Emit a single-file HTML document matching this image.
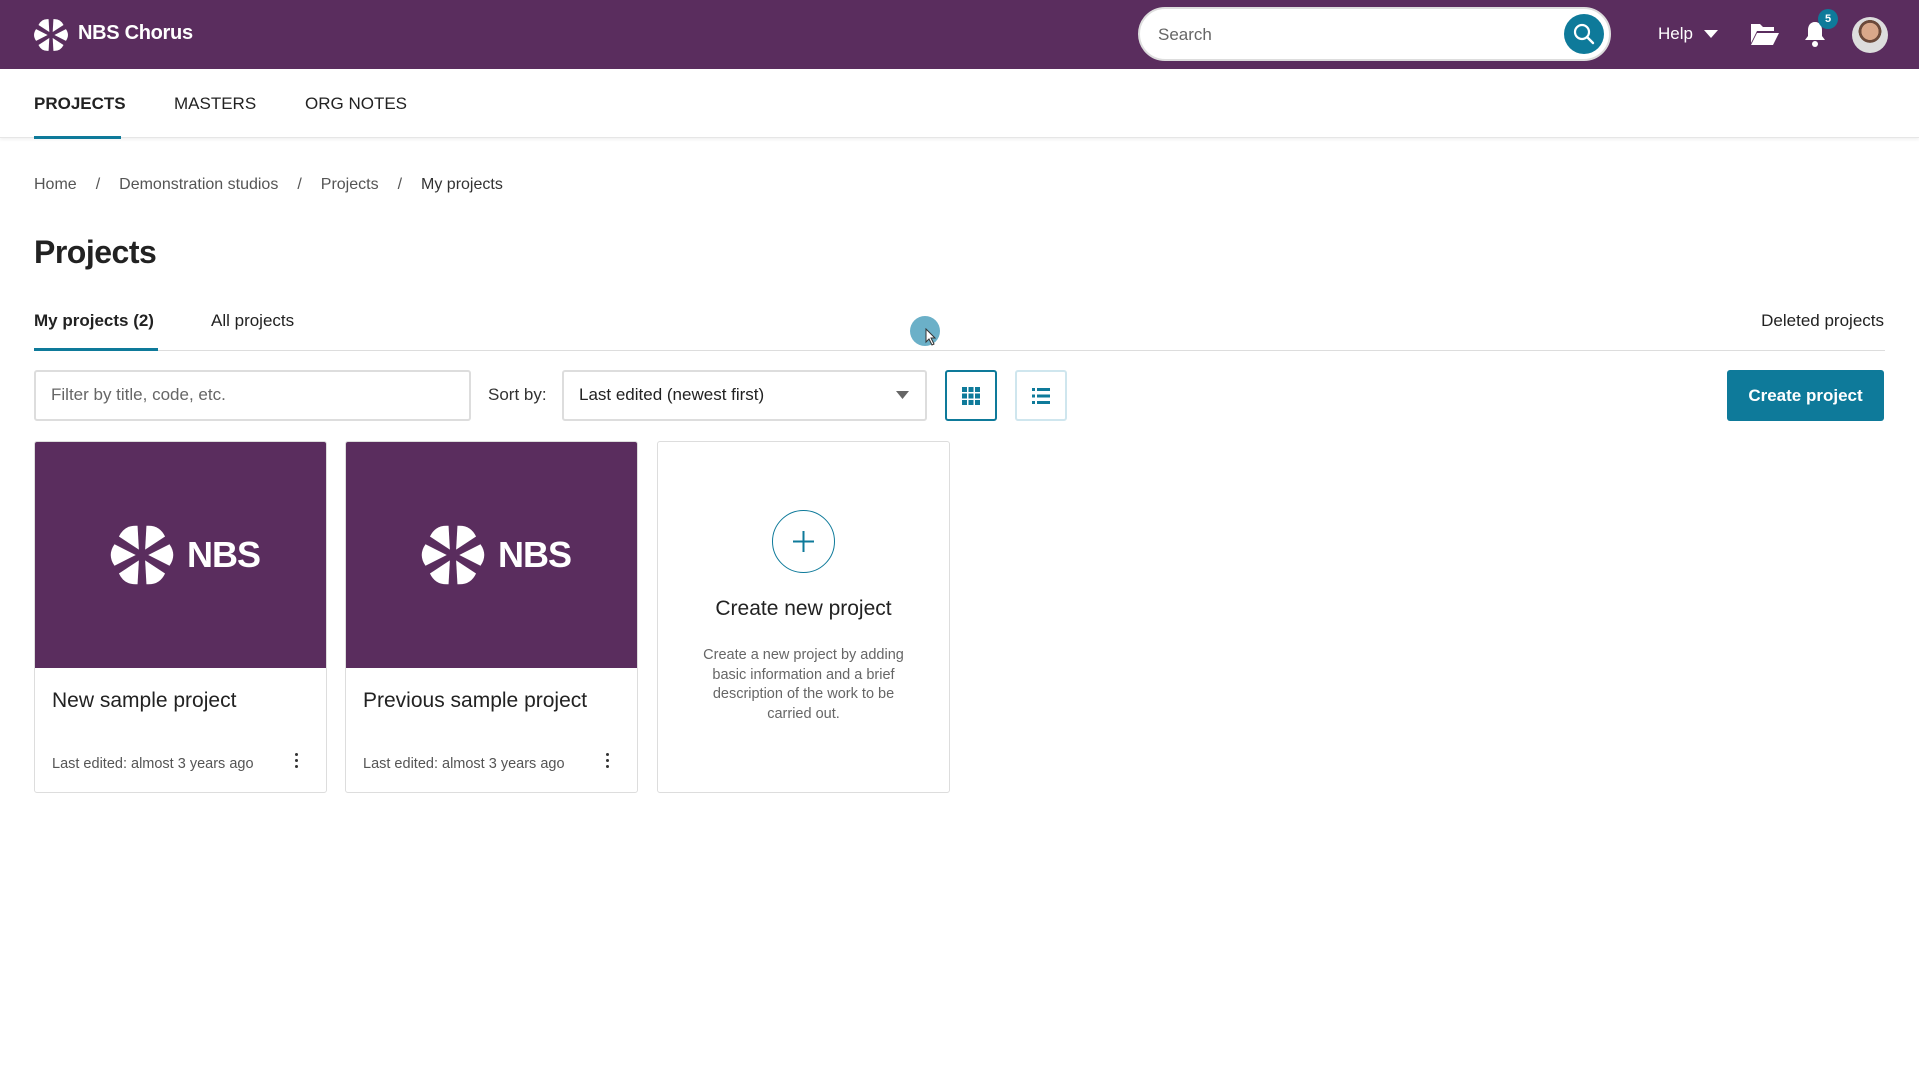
<!DOCTYPE html>
<html><head><meta charset="utf-8"><style>
*{box-sizing:border-box;margin:0;padding:0}
body{width:1919px;height:1079px;background:#fff;font-family:"Liberation Sans",sans-serif;color:#222;position:relative;overflow:hidden}
.a{position:absolute;white-space:nowrap}
.hdr{position:absolute;left:0;top:0;width:1919px;height:69px;background:#5a2d5e}
.nav{position:absolute;left:0;top:69px;width:1919px;height:69px;border-bottom:1px solid #e6e6e6;box-shadow:0 2px 3px rgba(0,0,0,.05)}
.card{position:absolute;top:441px;width:293px;height:352px;border:1px solid #ddd;border-radius:3px;background:#fff;overflow:hidden}
.img{height:226px;background:#5a2d5e;position:relative}
.ct{position:absolute;left:17px;top:247px;font-size:21px;color:#222}
.cl{position:absolute;left:17px;top:314px;font-size:14.5px;color:#555}
.dots{position:absolute;left:260px;top:311px;width:4px}
.dots i{display:block;width:3px;height:3px;background:#333;border-radius:50%;margin-bottom:3px}
.bc{margin:0 19px}
</style></head><body>
<svg width="0" height="0" style="position:absolute"><defs>
<g id="star"><g id="p"><path d="M2.5,0 L11,-4.3 Q14,0 11,4.3 Z" fill="#fff"/></g>
<use href="#p" transform="rotate(60)"/><use href="#p" transform="rotate(120)"/><use href="#p" transform="rotate(180)"/><use href="#p" transform="rotate(240)"/><use href="#p" transform="rotate(300)"/></g>
</defs></svg>
<div class="hdr"></div>
<svg class="a" style="left:32px;top:16px" width="38" height="38" viewBox="-14 -14 28 28"><use href="#star"/></svg>
<div class="a" style="left:78px;top:22px;font-size:20px;font-weight:bold;color:#fff;letter-spacing:-.3px">NBS Chorus</div>
<div class="a" style="left:1138px;top:7px;width:473px;height:54px;background:#fff;border-radius:27px;border:2px solid #ddd"></div>
<div class="a" style="left:1158px;top:25px;font-size:17px;color:#666">Search</div>
<div class="a" style="left:1564px;top:14px;width:40px;height:40px;border-radius:50%;background:#0e7a9a"></div>
<svg class="a" style="left:1572px;top:22px" width="24" height="24" viewBox="0 0 24 24"><circle cx="10" cy="10" r="7" fill="none" stroke="#fff" stroke-width="2.2"/><path d="M15 15l6 6" stroke="#fff" stroke-width="2.4" stroke-linecap="round"/></svg>
<div class="a" style="left:1658px;top:24px;font-size:17px;color:#fff">Help</div>
<svg class="a" style="left:1704px;top:30px" width="14" height="9"><path d="M0 0h14L7 8z" fill="#fff"/></svg>
<svg class="a" style="left:1750px;top:21px" width="30" height="26" viewBox="0 0 30 26"><path d="M1 3h9l3 3h11v4H7L1 22z" fill="#fff"/><path d="M7 12h22l-6 12H1z" fill="#fff"/></svg>
<svg class="a" style="left:1804px;top:20px" width="22" height="28" viewBox="0 0 22 28"><path d="M11 2c-5 0-7 4-7 8v6l-3 4h20l-3-4v-6c0-4-2-8-7-8z" fill="#fff"/><circle cx="11" cy="24" r="3" fill="#fff"/></svg>
<div class="a" style="left:1818px;top:9px;width:20px;height:20px;border-radius:50%;background:#0e7a9a;color:#fff;font-size:11px;font-weight:bold;text-align:center;line-height:20px">5</div>
<div class="a" style="left:1852px;top:17px;width:36px;height:36px;border-radius:50%;background:radial-gradient(circle at 50% 40%,#d9a88a 0 30%,#6b4a3a 31% 40%,#ddd 41%)"></div>
<div class="nav"></div>
<div class="a" style="left:34px;top:94px;font-size:17px;font-weight:bold;color:#222">PROJECTS</div>
<div class="a" style="left:34px;top:136px;width:87px;height:3px;background:#0e7a9a"></div>
<div class="a" style="left:174px;top:94px;font-size:17px;color:#222">MASTERS</div>
<div class="a" style="left:305px;top:94px;font-size:17px;color:#222">ORG NOTES</div>
<div class="a" style="left:34px;top:176px;font-size:16px;color:#555">Home<span class="bc">/</span>Demonstration studios<span class="bc">/</span>Projects<span class="bc">/</span><span style="color:#333">My projects</span></div>
<div class="a" style="left:34px;top:234px;font-size:32px;font-weight:bold;color:#222;letter-spacing:-.5px">Projects</div>
<div class="a" style="left:34px;top:311px;font-size:17px;font-weight:bold;color:#222">My projects (2)</div>
<div class="a" style="left:211px;top:311px;font-size:17px;color:#222">All projects</div>
<div class="a" style="right:35px;top:311px;font-size:17px;color:#222">Deleted projects</div>
<div class="a" style="left:34px;top:350px;width:1851px;height:1px;background:#ddd"></div>
<div class="a" style="left:34px;top:348px;width:124px;height:3px;background:#0e7a9a"></div>
<div class="a" style="left:910px;top:316px;width:30px;height:30px;border-radius:50%;background:#6bb0c8"></div>
<svg class="a" style="left:925px;top:328px" width="12" height="18"><path d="M1 1v13l3-3 3 6 2-1-3-6h4z" fill="#fff" stroke="#333" stroke-width="1"/></svg>
<div class="a" style="left:34px;top:370px;width:437px;height:51px;border:2px solid #ddd;border-radius:3px"></div>
<div class="a" style="left:51px;top:385px;font-size:17px;color:#666">Filter by title, code, etc.</div>
<div class="a" style="left:488px;top:385px;font-size:17px;color:#333">Sort by:</div>
<div class="a" style="left:562px;top:370px;width:365px;height:51px;border:2px solid #ddd;border-radius:3px"></div>
<div class="a" style="left:579px;top:385px;font-size:17px;color:#222">Last edited (newest first)</div>
<svg class="a" style="left:896px;top:391px" width="13" height="8"><path d="M0 0h13L6.5 8z" fill="#666"/></svg>
<div class="a" style="left:945px;top:370px;width:52px;height:51px;border:2px solid #0e7a9a;border-radius:3px"></div>
<svg class="a" style="left:962px;top:387px" width="18" height="18"><g fill="#0e7a9a"><rect x="0" y="0" width="5" height="5"/><rect x="6.5" y="0" width="5" height="5"/><rect x="13" y="0" width="5" height="5"/><rect x="0" y="6.5" width="5" height="5"/><rect x="6.5" y="6.5" width="5" height="5"/><rect x="13" y="6.5" width="5" height="5"/><rect x="0" y="13" width="5" height="5"/><rect x="6.5" y="13" width="5" height="5"/><rect x="13" y="13" width="5" height="5"/></g></svg>
<div class="a" style="left:1015px;top:370px;width:52px;height:51px;border:2px solid #cfe6ee;border-radius:3px"></div>
<svg class="a" style="left:1032px;top:388px" width="18" height="16"><g fill="#0e7a9a"><rect x="0" y="0" width="3" height="3"/><rect x="5" y="0" width="13" height="3"/><rect x="0" y="6.5" width="3" height="3"/><rect x="5" y="6.5" width="13" height="3"/><rect x="0" y="13" width="3" height="3"/><rect x="5" y="13" width="13" height="3"/></g></svg>
<div class="a" style="left:1727px;top:370px;width:157px;height:51px;background:#0e7a9a;border-radius:3px;color:#fff;font-size:17px;font-weight:bold;text-align:center;line-height:51px">Create project</div>

<div class="card" style="left:34px">
<div class="img"><svg class="a" style="left:72px;top:78px" width="70" height="70" viewBox="-14 -14 28 28"><use href="#star"/></svg><div class="a" style="left:152px;top:92px;font-size:36px;color:#fff;font-weight:bold;letter-spacing:-1px">NBS</div></div>
<div class="ct">New sample project</div><div class="cl">Last edited: almost 3 years ago</div><div class="dots"><i></i><i></i><i></i></div></div>
<div class="card" style="left:345px">
<div class="img"><svg class="a" style="left:72px;top:78px" width="70" height="70" viewBox="-14 -14 28 28"><use href="#star"/></svg><div class="a" style="left:152px;top:92px;font-size:36px;color:#fff;font-weight:bold;letter-spacing:-1px">NBS</div></div>
<div class="ct">Previous sample project</div><div class="cl">Last edited: almost 3 years ago</div><div class="dots"><i></i><i></i><i></i></div></div>
<div class="card" style="left:657px">
<div class="a" style="left:114px;top:68px;width:63px;height:63px;border:1.5px solid #0e7a9a;border-radius:50%"></div>
<svg class="a" style="left:134px;top:88px" width="23" height="23"><path d="M11.5 1v21M1 11.5h21" stroke="#0e7a9a" stroke-width="2"/></svg>
<div class="a" style="left:0;width:291px;text-align:center;top:155px;font-size:21px;color:#222">Create new project</div>
<div class="a" style="left:40px;width:211px;white-space:normal;text-align:center;top:204px;font-size:14.5px;line-height:19.6px;color:#666">Create a new project by adding basic information and a brief description of the work to be carried out.</div>
</div>
</body></html>
